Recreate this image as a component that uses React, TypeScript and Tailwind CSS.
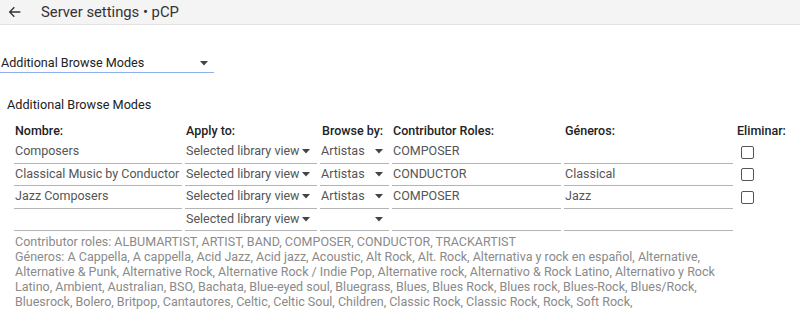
import React from "react";

const Caret = () => (
  <svg width="8" height="5" viewBox="0 0 8 5" className="shrink-0">
    <path d="M0 0 L8 0 L4 4.5 Z" fill="#444" />
  </svg>
);

type Row = { name: string; apply: string; browse: string; roles: string; genres: string; del: boolean };

const rows: Row[] = [
  { name: "Composers", apply: "Selected library view", browse: "Artistas", roles: "COMPOSER", genres: "", del: true },
  { name: "Classical Music by Conductor", apply: "Selected library view", browse: "Artistas", roles: "CONDUCTOR", genres: "Classical", del: true },
  { name: "Jazz Composers", apply: "Selected library view", browse: "Artistas", roles: "COMPOSER", genres: "Jazz", del: true },
  { name: "", apply: "Selected library view", browse: "", roles: "", genres: "", del: false },
];

const cell = "h-[22.5px] border-b-[1.5px] border-[#b4b4b4] flex items-center text-[12.5px] text-[#555] whitespace-nowrap overflow-hidden";
const head = "h-[16px] flex items-center text-[12.5px] font-medium text-[#222]";

export default function App() {
  return (
    <div className="w-[800px] h-[311px] bg-white overflow-hidden" style={{ fontFamily: "Roboto, 'Noto Sans', sans-serif" }}>
      <div className="h-[25px] bg-[#f4f4f4] border-b border-[#e2e2e2] flex items-center">
        <svg width="16" height="16" viewBox="0 0 24 24" className="ml-[7px]" fill="none" stroke="#333" strokeWidth="2">
          <path d="M20 12H5M11 5l-7 7 7 7" />
        </svg>
        <span className="ml-[18px] text-[14.8px] text-[#333] leading-none">Server settings • pCP</span>
      </div>

      <div className="mt-[29px] w-[214px] h-[19px] border-b border-[#8fb0ee] flex items-center justify-between pl-[1px] pr-[6px]">
        <span className="text-[12.6px] text-[#222]">Additional Browse Modes</span>
        <Caret />
      </div>

      <div className="mt-[24px] ml-[7px] h-[16px] flex items-center text-[12.7px] text-[#222]">Additional Browse Modes</div>

      <div className="mt-[10px] ml-[14px] grid grid-cols-[168px_132px_69px_169px_169px_1fr] gap-x-[3px]">
        <div className={head + " pl-[1px]"}>Nombre:</div>
        <div className={head + " pl-[1px]"}>Apply to:</div>
        <div className={head + " pl-[2px]"}>Browse by:</div>
        <div className={head + " pl-[1px]"}>Contributor Roles:</div>
        <div className={head + " pl-[1px]"}>Géneros:</div>
        <div className={head + " pl-[1px]"}>Eliminar:</div>
        <div className="col-span-6 h-[2px]" />
        {rows.map((r, i) => (
          <React.Fragment key={i}>
            <div className={cell + " pl-[1px]"}>{r.name}</div>
            <div className={cell + " pl-[1px] pr-[7px] justify-between"}>
              <span>{r.apply}</span>
              <Caret />
            </div>
            <div className={cell + " pl-[1px] pr-[6px] justify-between"}>
              <span>{r.browse}</span>
              <Caret />
            </div>
            <div className={cell + " pl-[1px]"}>{r.roles}</div>
            <div className={cell + " pl-[1px]"}>{r.genres}</div>
            <div className="h-[22.5px] flex items-center pl-[5px]">
              {r.del && <div className="w-[13px] h-[13px] border-[1.5px] border-[#555] rounded-[2px]" />}
            </div>
          </React.Fragment>
        ))}
      </div>

      <div className="mt-[3px] ml-[15px] text-[12.5px] leading-[15px] text-[#8a8a8a] whitespace-nowrap">
        <div>Contributor roles: ALBUMARTIST, ARTIST, BAND, COMPOSER, CONDUCTOR, TRACKARTIST</div>
        <div>Géneros: A Cappella, A cappella, Acid Jazz, Acid jazz, Acoustic, Alt Rock, Alt. Rock, Alternativa y rock en español, Alternative,</div>
        <div>Alternative &amp; Punk, Alternative Rock, Alternative Rock / Indie Pop, Alternative rock, Alternativo &amp; Rock Latino, Alternativo y Rock</div>
        <div>Latino, Ambient, Australian, BSO, Bachata, Blue-eyed soul, Bluegrass, Blues, Blues Rock, Blues rock, Blues-Rock, Blues/Rock,</div>
        <div>Bluesrock, Bolero, Britpop, Cantautores, Celtic, Celtic Soul, Children, Classic Rock, Classic Rock, Rock, Soft Rock,</div>
      </div>
    </div>
  );
}
